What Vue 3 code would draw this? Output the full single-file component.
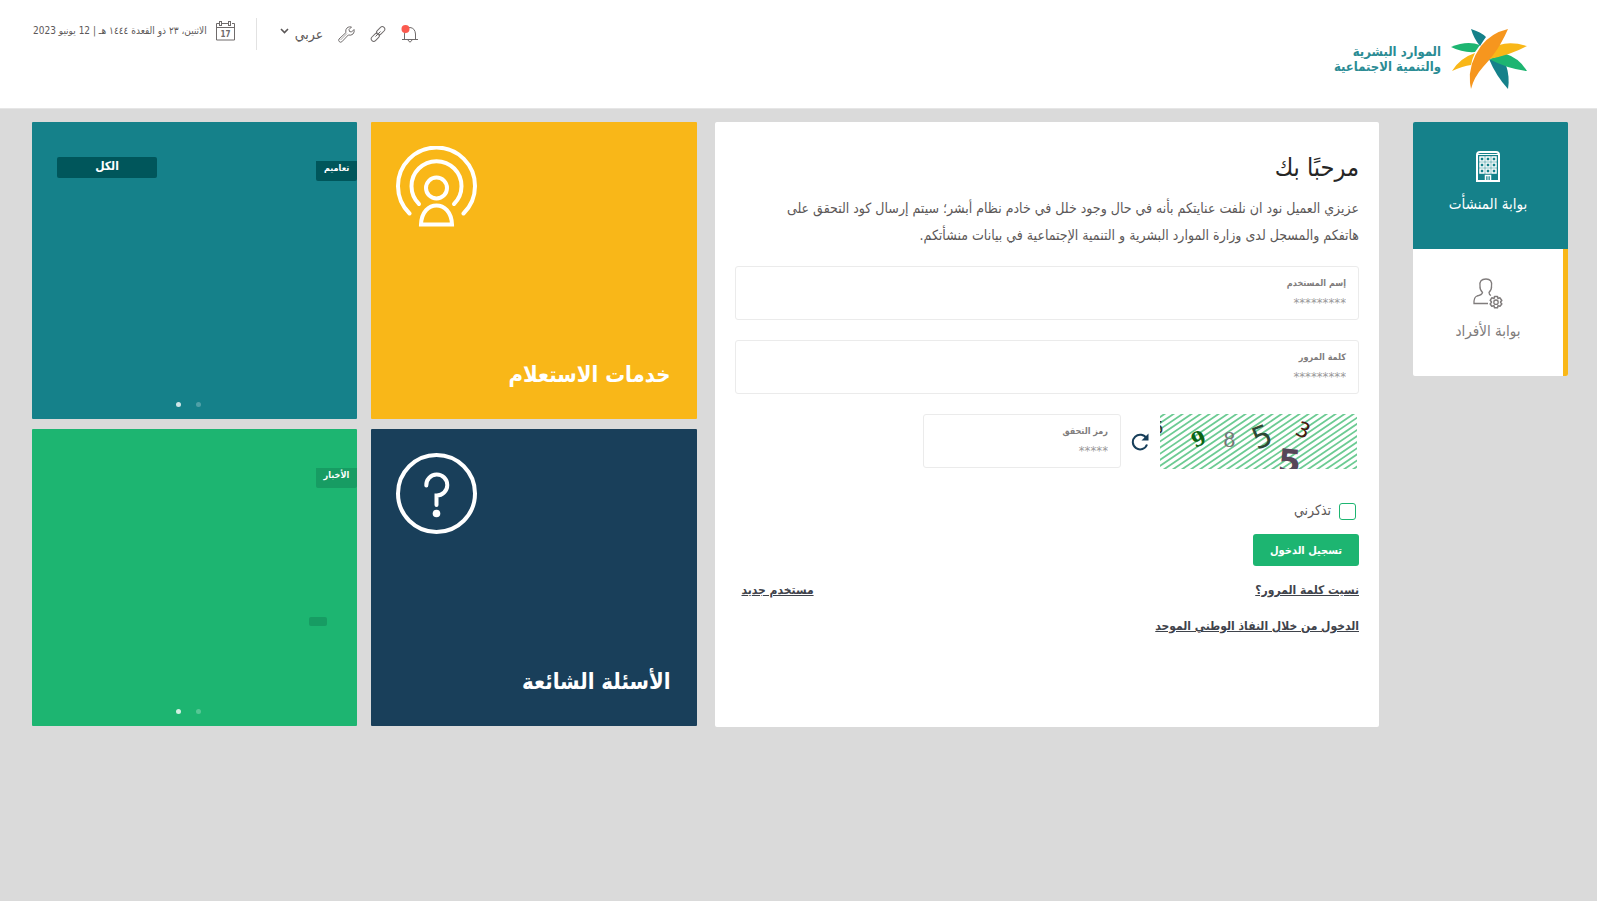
<script setup>
import { ref } from 'vue'

const username = ref('')
const password = ref('')
const code = ref('')
const remember = ref(false)
const windows = [5, 11, 17].flatMap((y) => [3, 9, 15].map((x) => ({ x, y })))
const hatch = Array.from({ length: 36 }, (_, i) => -96 + i * 9)
</script>

<template>
  <div class="page" dir="rtl" lang="ar">
    <header class="header">
      <a class="brand" href="#">
        <svg class="brand-mark" viewBox="0 0 76 62" aria-hidden="true">
          <path fill="#15818a" d="M20 1Q30 4 35 9Q32 13 29 18Q23 11 20 1Z" />
          <path fill="#1db571" d="M0 19Q16 12 29 17L24 24Q12 25 0 19Z" />
          <path fill="#f9b718" d="M1 43Q9 30 24 25Q21 31 20 37Q12 38 1 43Z" />
          <path fill="#15818a" d="M38 31Q48 33 55 37Q59 49 57 61Q45 48 38 31Z" />
          <path fill="#1db571" d="M38 31L55 26Q68 30 76 43Q57 41 38 31Z" />
          <path fill="#f9b718" d="M38 31L48 17Q60 13 76 18Q60 27 38 31Z" />
          <path fill="#f6961e" d="M57 1Q40 5 30 18Q17 36 19 55L20 61Q23 49 32 39Q44 26 50 15Q54 8 57 1Z" />
        </svg>
        <span class="brand-name">الموارد البشرية<br />والتنمية الاجتماعية</span>
      </a>

      <div class="tools">
        <button class="icon-button" type="button" aria-label="التنبيهات">
          <svg width="18" height="18" viewBox="0 0 18 18" fill="none" stroke="#6f6b6b">
            <path d="M1 14.500H17M3.500 14V9Q4 3 9 2.500Q14 3 14.500 9V14M7 15Q9 19 11 15" />
            <circle cx="4.500" cy="4" r="4" fill="#fb5a4f" stroke="none" />
          </svg>
        </button>
        <button class="icon-button" type="button" aria-label="روابط">
          <svg width="16" height="16" viewBox="0 0 16 16" fill="none" stroke="#6f6b6b">
            <rect x="-3.800" y="-2.500" width="9.500" height="5" rx="2.500" transform="translate(10 5.500) rotate(-45)" />
            <rect x="-5.700" y="-2.500" width="9.500" height="5" rx="2.500" transform="translate(6 10.500) rotate(-45)" />
            <path d="M5.500 10.500L10.500 5.500" />
          </svg>
        </button>
        <button class="icon-button" type="button" aria-label="أدوات">
          <svg width="17" height="17" viewBox="0 0 17 17" fill="none" stroke="#6f6b6b" stroke-linejoin="round">
            <path d="M13.500 1Q9.500 .2 8 3.500Q7.500 5 8 6.500L1 13Q.2 14.500 1.200 15.500Q2.300 16.800 3.800 15.800L10.300 9Q13 9.800 15 8Q16.800 6 16 3.500L13.500 6L11.500 5.500L11 3.500Z" />
            <path d="M2.500 14L9 7.500" stroke-width=".6" />
          </svg>
        </button>
        <button class="language" type="button">
          <span>عربي</span>
          <svg width="9" height="6" viewBox="0 0 9 6" fill="none" stroke="#5a5656" stroke-width="1.600"><path d="M1 1L4.500 4.500L8 1" /></svg>
        </button>
        <div class="date">
          <svg width="19" height="20" viewBox="0 0 19 20" fill="none" stroke="#6f6b6b">
            <path d="M3 2.500H.5V19H18.500V2.500H16M6 2.500H12M.5 6.500H18.500" />
            <rect x="3.500" y=".5" width="2" height="4" />
            <rect x="12.500" y=".5" width="2" height="4" />
            <text x="9.500" y="16" text-anchor="middle" class="date-number">17</text>
          </svg>
          <span>الاثنين، ٢٣ ذو القعدة ١٤٤٤ هـ | 12 يونيو 2023</span>
        </div>
      </div>
    </header>

    <main class="main">
      <nav class="portals">
        <a class="portal portal-active" href="#">
          <svg width="24" height="31" viewBox="0 0 24 31" fill="none" stroke="#fff">
            <path d="M1 30V4Q1 1 4 1H20Q23 1 23 4V30Z" stroke-width="2" />
            <path d="M2 3.500H22" />
            <rect v-for="w in windows" :key="w.x + '-' + w.y" :x="w.x + 1" :y="w.y + 1" width="4" height="4" stroke-width="1.500" />
            <path d="M9.500 30V24.500H14.500V30" stroke-width="1.500" />
            <path d="M12 25V30" />
          </svg>
          <span>بوابة المنشأت</span>
        </a>
        <a class="portal" href="#">
          <svg width="30" height="31" viewBox="0 0 30 31" fill="none" stroke="#807c7c" stroke-width="1.300">
            <path d="M15 25.500H1Q.8 19 4 18Q9 17 9.500 14.500Q6.500 11 7 8Q6 1 13 1Q19.500 1 18.500 8Q19 11 16 14.500Q16 16.500 18 17.500" />
            <path d="M21.500 18.500H24.500L25 20.500L27 19.800L28.800 22.500L27.500 24L28.800 26L27 28.200L25 27.700L24.500 29.800H21.500L21 27.700L18.800 28.200L17.200 26L18.500 24L17.200 22.300L18.800 19.800L21 20.500Z" stroke-linejoin="round" stroke-width="1.500" />
            <circle cx="23" cy="24.200" r="2.200" />
          </svg>
          <span>بوابة الأفراد</span>
        </a>
      </nav>

      <section class="login">
        <h1>مرحبًا بك</h1>
        <p class="notice">
          عزيزي العميل نود ان نلفت عنايتكم بأنه في حال وجود خلل في خادم نظام أبشر؛ سيتم إرسال كود التحقق على<br />
          هاتفكم والمسجل لدى وزارة الموارد البشرية و التنمية الإجتماعية في بيانات منشأتكم.
        </p>
        <form @submit.prevent>
          <div class="field">
            <label for="username">إسم المستخدم</label>
            <input id="username" v-model="username" type="text" placeholder="*********" />
          </div>
          <div class="field">
            <label for="password">كلمة المرور</label>
            <input id="password" v-model="password" type="password" placeholder="*********" />
          </div>
          <div class="verify">
            <svg class="captcha" width="197" height="55" viewBox="0 0 197 55" role="img" aria-label="رمز التحقق">
              <rect width="197" height="55" fill="#fff" />
              <path v-for="x in hatch" :key="x" :d="`M${x} 56L${x + 84} -1`" stroke="#6ccb93" stroke-width="1.800" />
              <text x="-7" y="20" class="sans" font-size="17" fill="#333">5</text>
              <text transform="translate(35 34) rotate(-24)" class="serif heavy" font-size="20" fill="#0a6414">9</text>
              <text x="63" y="33" class="serif" font-size="20" fill="#777">8</text>
              <text transform="translate(97 36) rotate(-22)" class="sans" font-size="30" fill="#2c4934">5</text>
              <text transform="translate(134 20) rotate(24)" class="sans" font-size="21" fill="#46190e">3</text>
              <text transform="translate(117 58) rotate(5)" class="sans heavy" font-size="33" fill="#574759">5</text>
            </svg>
            <button class="refresh" type="button" aria-label="تحديث الرمز">
              <svg width="18" height="18" viewBox="0 0 18 18" fill="none">
                <path d="M15.500 5.500A7.300 7.300 0 1 0 16 11.500" stroke="#173e5a" stroke-width="2" />
                <path d="M17.500 .5V7.500H10.500Z" fill="#173e5a" />
              </svg>
            </button>
            <div class="field code">
              <label for="code">رمز التحقق</label>
              <input id="code" v-model="code" type="text" placeholder="*****" />
            </div>
          </div>
          <div class="remember">
            <input id="remember" v-model="remember" type="checkbox" />
            <label for="remember">تذكرني</label>
          </div>
          <button class="submit" type="submit">تسجيل الدخول</button>
        </form>
        <div class="links">
          <a href="#">نسيت كلمة المرور؟</a>
          <a href="#">مستخدم جديد</a>
        </div>
        <div class="links">
          <a href="#">الدخول من خلال النفاذ الوطني الموحد</a>
        </div>
      </section>

      <section class="tiles">
        <a class="tile yellow" href="#">
          <svg class="tile-icon" width="81" height="81" viewBox="0 0 81 81" fill="none" stroke="#fff" stroke-width="4" stroke-linecap="round">
            <path d="M13.500 67.500A38.500 38.500 0 1 1 67.500 67.500" />
            <path d="M23 58A25 25 0 1 1 58 58" />
            <circle cx="40.500" cy="42" r="10.500" />
            <path d="M25 78.500C26 53 55 53 56 78.500Z" />
          </svg>
          <span class="tile-title">خدمات الاستعلام</span>
        </a>
        <div class="tile teal">
          <div class="tile-head">
            <span class="tag">تعاميم</span>
            <a class="all" href="#">الكل</a>
          </div>
          <div class="dots">
            <button type="button" aria-label="1"></button>
            <button type="button" class="current" aria-label="2"></button>
          </div>
        </div>
        <a class="tile navy" href="#">
          <svg class="tile-icon" width="81" height="81" viewBox="0 0 81 81" fill="none" stroke="#fff" stroke-width="4" stroke-linecap="round">
            <circle cx="40.500" cy="40.500" r="38.500" />
            <path d="M30.300 32.500A10.500 10.500 0 1 1 40.500 42.500V52" />
            <circle cx="40.500" cy="60.500" r="3.800" fill="#fff" stroke="none" />
          </svg>
          <span class="tile-title">الأسئلة الشائعة</span>
        </a>
        <div class="tile green">
          <div class="tile-head">
            <span class="tag">الأخبار</span>
          </div>
          <span class="blank-tag"></span>
          <div class="dots">
            <button type="button" aria-label="1"></button>
            <button type="button" class="current" aria-label="2"></button>
          </div>
        </div>
      </section>
    </main>
  </div>
</template>

<style>
body {
  margin: 0;
  background: #dadada;
}
</style>

<style scoped>
.page,
.page button,
.page input {
  font-family: "DejaVu Sans Condensed", "DejaVu Sans", sans-serif;
}
.page {
  min-height: 100vh;
  background: #dadada;
  color: #5c5858;
}
.page *,
.page {
  box-sizing: border-box;
}
a {
  color: inherit;
  text-decoration: none;
}
button {
  border: 0;
  padding: 0;
  background: none;
  color: inherit;
  cursor: pointer;
}
svg {
  display: block;
  flex: none;
}

.header {
  display: flex;
  justify-content: space-between;
  align-items: flex-start;
  height: 109px;
  padding: 0 70px 0 33px;
  background: #fff;
  border-bottom: 1px solid #e6e6e6;
}
.brand {
  display: flex;
  gap: 10px;
  align-items: center;
  padding-top: 28px;
  color: #2b8c94;
}
.brand-mark {
  width: 76px;
  height: 62px;
}
.brand-name {
  font-size: 13px;
  font-weight: 700;
  line-height: 15px;
  white-space: nowrap;
}
.tools {
  display: flex;
  align-items: center;
  gap: 15px;
  height: 32px;
  margin-top: 18px;
}
.language {
  display: flex;
  align-items: center;
  gap: 6px;
  font-size: 14px;
}
.language svg {
  margin-bottom: 6px;
}
.date {
  display: flex;
  align-items: center;
  gap: 9px;
  height: 32px;
  margin-right: 8px;
  padding-right: 21px;
  padding-bottom: 7px;
  border-right: 1px solid #e2e2e2;
  font-size: 10px;
  white-space: nowrap;
}
.date-number {
  font: 700 8px "DejaVu Sans Condensed", sans-serif;
  fill: #6f6b6b;
  stroke: none;
}

.main {
  display: grid;
  grid-template-columns: 171px minmax(0, 1fr) minmax(0, 1fr);
  column-gap: 18px;
  align-items: start;
  padding: 13px 29px 32px 32px;
}
.portals {
  width: 155px;
  border-radius: 2px;
  overflow: hidden;
}
.portal {
  display: flex;
  flex-direction: column;
  align-items: center;
  gap: 11px;
  height: 127px;
  padding-top: 29px;
  background: #fff;
  border-right: 5px solid #f9b718;
  color: #807c7c;
  font-size: 15px;
  line-height: 22px;
}
.portal-active {
  background: #15818a;
  border-right-color: #15818a;
  color: #fff;
}

.login {
  min-height: 605px;
  padding: 32px 20px;
  background: #fff;
  border-radius: 2px;
}
h1 {
  margin: 0 0 13px;
  color: #262626;
  font-size: 25px;
  font-weight: 400;
  line-height: 28px;
}
.notice {
  margin: 0 0 17px;
  font-size: 14px;
  line-height: 27px;
}
.field {
  height: 54px;
  margin-bottom: 20px;
  padding: 8px 12px;
  border: 1px solid #ebebeb;
  border-radius: 3px;
}
.field label {
  display: block;
  color: #807c7c;
  font-size: 9px;
  font-weight: 700;
  line-height: 16px;
}
.field input {
  display: block;
  width: 100%;
  height: 22px;
  padding: 0;
  border: 0;
  outline: 0;
  background: none;
  font-size: 13px;
}
.field input::placeholder {
  color: #999;
  opacity: 1;
}
.verify {
  display: flex;
  align-items: flex-start;
  padding-right: 2px;
}
.captcha {
  direction: ltr;
}
.refresh {
  margin: 19px 11px 0 10px;
}
.field.code {
  width: 198px;
  margin-bottom: 0;
}
.remember {
  display: flex;
  align-items: center;
  gap: 8px;
  height: 17px;
  margin-top: 34px;
  padding-right: 3px;
  font-size: 14px;
}
.remember label {
  padding-bottom: 4px;
}
.remember input {
  appearance: none;
  width: 17px;
  height: 17px;
  margin: 0;
  border: 1px solid #1db571;
  border-radius: 3px;
}
.submit {
  display: block;
  height: 32px;
  margin-top: 14px;
  padding: 0 17px;
  background: #1db571;
  border-radius: 3px;
  color: #fff;
  font-size: 11px;
  font-weight: 700;
}
.links {
  display: flex;
  justify-content: space-between;
  margin-top: 12px;
  padding-left: 7px;
  color: #3f434b;
  font-size: 12px;
  font-weight: 700;
  line-height: 24px;
}
.links a {
  text-decoration: underline;
}

.tiles {
  display: grid;
  grid-template-columns: 1fr 1fr;
  gap: 10px 14px;
}
.tile {
  display: flex;
  flex-direction: column;
  min-height: 297px;
  border-radius: 1px;
  color: #fff;
}
.yellow { background: #f9b718; }
.teal { background: #15818a; }
.navy { background: #193f5a; }
.green { background: #1db571; }
.tile-icon {
  align-self: flex-end;
  margin: 24px 0 0 25px;
}
.tile-title {
  margin: auto 26px 28px;
  font-size: 22px;
  font-weight: 700;
  line-height: 32px;
}
.tile-head {
  display: flex;
  justify-content: space-between;
  align-items: flex-start;
  padding: 35px 0 0 25px;
}
.tag {
  height: 20px;
  margin-top: 4px;
  padding: 0 8px;
  background: #00565b;
  border-radius: 0 0 2px 2px;
  font-size: 9px;
  font-weight: 700;
  line-height: 15px;
}
.green .tag,
.blank-tag {
  background: #179c63;
}
.all {
  width: 100px;
  height: 21px;
  background: #00565b;
  border-radius: 2px;
  font-size: 12px;
  font-weight: 700;
  line-height: 19px;
  text-align: center;
}
.blank-tag {
  width: 18px;
  height: 9px;
  margin: 129px 30px 0 0;
  border-radius: 2px;
}
.dots {
  display: flex;
  justify-content: center;
  gap: 15px;
  margin-top: auto;
  padding: 0 13px 12px 0;
}
.dots button {
  width: 5px;
  height: 5px;
  border-radius: 50%;
  background: #fff;
  opacity: .25;
}
.dots .current {
  opacity: .8;
}
.serif { font-family: "DejaVu Serif", serif; }
.sans { font-family: "DejaVu Sans", sans-serif; }
.heavy { font-weight: 700; }
</style>
